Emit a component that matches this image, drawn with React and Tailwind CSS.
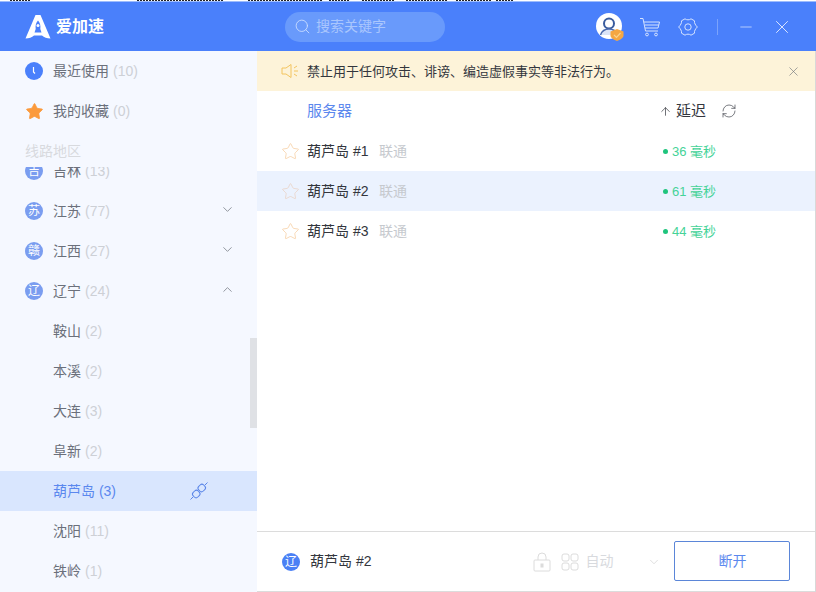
import React from "react";
import { ChevronDown, ChevronUp, Search, Minus, X, RefreshCw, Star, ArrowUp } from "lucide-react";

const font = { fontFamily: '"Liberation Sans", "Noto Sans CJK SC", sans-serif' };

// leftover pixels from the window behind, along the very top edge
const topDashes = [
  [10, 20], [137, 86], [248, 74], [329, 21], [362, 33], [406, 42], [456, 36], [496, 18],
];

function Badge({ text, dark }) {
  return (
    <span className={`flex h-[18px] w-[18px] shrink-0 items-center justify-center rounded-full text-[12px] leading-none text-white ${dark ? "bg-[#4a80f5]" : "bg-[#7a9df0]"}`}>
      {text}
    </span>
  );
}

function Province({ badge, name, count, open }) {
  return (
    <div className="flex h-10 items-center pl-[25px] pr-[22px]">
      <Badge text={badge} />
      <span className="ml-[10px] text-[14px] text-[#6b707b]">{name}</span>
      <span className="ml-1 text-[14px] text-[#cdd0d6]">({count})</span>
      {open !== undefined && (
        <span className="ml-auto -mt-[3px] text-[#70757f]">
          {open ? <ChevronUp size={15} strokeWidth={1.2} /> : <ChevronDown size={15} strokeWidth={1.2} />}
        </span>
      )}
    </div>
  );
}

function City({ name, count }) {
  return (
    <div className="flex h-10 items-center pl-[53px]">
      <span className="text-[14px] text-[#6b707b]">{name}</span>
      <span className="ml-1 text-[14px] text-[#cdd0d6]">({count})</span>
    </div>
  );
}

function ServerRow({ num, ms, active }) {
  return (
    <div className={`flex h-10 items-center pl-[24px] pt-px ${active ? "bg-[#ebf2fe]" : ""}`}>
      <Star size={19} strokeWidth={0.9} className={active ? "text-[#e8cfc0]" : "text-[#f5c99a]"} />
      <span className="ml-[7px] w-[72px] text-[14px] text-[#33363d]">葫芦岛 #{num}</span>
      <span className="text-[14px] text-[#c6c9ce]">联通</span>
      <span className="ml-[256px] h-[5px] w-[5px] rounded-full bg-[#1fc47d]" />
      <span className="ml-[4px] text-[13px] text-[#45d398]">{ms} 毫秒</span>
    </div>
  );
}

export default function App() {
  return (
    <div className="relative flex h-[592px] w-[816px] flex-col overflow-hidden bg-white" style={font}>
      <div className="h-[1px] shrink-0 bg-white">
        {topDashes.map(([x, w], i) => (
          <span key={i} className="absolute top-0 h-px bg-[repeating-linear-gradient(90deg,#222_0,#222_2px,transparent_2px,transparent_3px)]" style={{ left: x, width: w }} />
        ))}
      </div>

      {/* top bar */}
      <div className="flex h-[50px] shrink-0 items-center border-t border-[#9dbcfd] bg-[#4a80fb]">
        <div className="ml-[25px] flex w-[260px] items-center">
          <svg width="26" height="26" viewBox="0 0 26 26">
            <path d="M10.5 1 H15.5 L25.5 24.5 C22 24.5 19 23.5 17 21.5 H9 C7 23.5 4 24.5 0.5 24.5 Z" fill="#fff" />
            <path d="M13 6.5 C15 8.5 15.8 11.5 15.3 15 L16.5 18.5 H9.5 L10.7 15 C10.2 11.5 11 8.5 13 6.5 Z" fill="#4a80fb" />
            <circle cx="13" cy="11.5" r="1.5" fill="#fff" />
          </svg>
          <span className="ml-[5px] text-[16px] font-bold text-white">爱加速</span>
        </div>
        <div className="flex h-[30px] w-[160px] items-center rounded-full bg-[#699afb] pl-[9px]">
          <Search size={17} strokeWidth={1.2} className="text-[#cfe0ff]" />
          <span className="ml-[5px] text-[14px] text-[#a9c6fd]">搜索关键字</span>
        </div>
        <svg width="28" height="28" viewBox="0 0 28 28" className="ml-[151px]">
          <circle cx="13" cy="13" r="13" fill="#fff" />
          <circle cx="13" cy="10.5" r="5" fill="#fff" stroke="#3a5c9e" strokeWidth="2" />
          <path d="M4.5 22 C6 17.5 9 16 13 16 C17 16 20 17.5 21.5 22" fill="#dbe4f7" stroke="#4a6aae" strokeWidth="1.4" />
          <path d="M21 16 L27.5 18.5 V22.5 C27.5 25 24 27 21 28 C18 27 14.5 25 14.5 22.5 V18.5 Z" fill="#f5a742" />
          <path d="M18 22 L20.5 24.5 L24.5 20" fill="none" stroke="#fbd38d" strokeWidth="1.2" />
        </svg>
        <svg width="22" height="20" viewBox="0 0 22 20" fill="none" stroke="#d5e3ff" strokeWidth="1" className="ml-[15px]">
          <path d="M1 1.5 H4 L6.5 14 H19" />
          <path d="M4.8 5 H20.5 L19 11 H6" />
          <path d="M6 8 H19.8" />
          <circle cx="8" cy="17.5" r="1.4" />
          <circle cx="17" cy="17.5" r="1.4" />
        </svg>
        <svg width="20" height="20" viewBox="0 0 20 20" fill="none" stroke="#d5e3ff" strokeWidth="1" strokeLinejoin="round" className="ml-[17px]">
          <path d="M7 1.8 C8.5 3.2 11.5 3.2 13 1.8 L16.5 3.8 C16 5.8 17.5 8.3 19.4 10 C17.5 11.7 16 14.2 16.5 16.2 L13 18.2 C11.5 16.8 8.5 16.8 7 18.2 L3.5 16.2 C4 14.2 2.5 11.7 0.6 10 C2.5 8.3 4 5.8 3.5 3.8 Z" />
          <circle cx="10" cy="10" r="3.2" />
        </svg>
        <span className="ml-[19px] h-[16px] w-px bg-[#7ba3fc]" />
        <Minus size={18} strokeWidth={1} className="ml-[19px] text-[#d5e3ff]" />
        <X size={22} strokeWidth={1} className="ml-[16px] text-[#e6eeff]" />
      </div>

      <div className="flex min-h-0 flex-1">
        {/* sidebar */}
        <div className="relative w-[257px] shrink-0 bg-[#f5f8ff]">
          <div className="flex h-10 items-center pl-[25px]">
            <svg width="18" height="18" viewBox="0 0 18 18">
              <circle cx="9" cy="9" r="9" fill="#4a80fb" />
              <path d="M8.5 5 V10 L10 11.5" fill="none" stroke="#fff" strokeWidth="1.2" />
            </svg>
            <span className="ml-[10px] text-[14px] text-[#6b707b]">最近使用</span>
            <span className="ml-1 text-[14px] text-[#cdd0d6]">(10)</span>
          </div>
          <div className="flex h-10 items-center pl-[25px]">
            <Star size={19} fill="#fb9a3c" strokeWidth={1} className="text-[#fb9a3c]" />
            <span className="ml-[9px] text-[14px] text-[#6b707b]">我的收藏</span>
            <span className="ml-1 text-[14px] text-[#cdd0d6]">(0)</span>
          </div>
          <div className="flex h-[36px] items-center pl-[25px] pt-[4px] text-[14px] text-[#d8dade]">线路地区</div>
          {/* half scrolled row */}
          <div className="flex h-[24px] items-end overflow-hidden">
            <div className="w-full shrink-0">
              <Province badge="吉" name="吉林" count="13" />
            </div>
          </div>
          <Province badge="苏" name="江苏" count="77" open={false} />
          <Province badge="赣" name="江西" count="27" open={false} />
          <Province badge="辽" name="辽宁" count="24" open />
          <City name="鞍山" count="2" />
          <City name="本溪" count="2" />
          <City name="大连" count="3" />
          <City name="阜新" count="2" />
          <div className="flex h-10 items-center bg-[#d9e6fe] pl-[53px]">
            <span className="text-[14px] text-[#5b88ee]">葫芦岛 (3)</span>
            <svg width="18" height="18" viewBox="0 0 18 18" fill="none" stroke="#5b86e8" strokeWidth="1" className="ml-[74px]">
              <path d="M0.5 17.5 L3 15 M15 3 L17.5 0.5" />
              <rect x="3" y="8.5" width="6.5" height="7" rx="2.5" transform="rotate(45 6.25 12)" />
              <rect x="8.5" y="2.5" width="6.5" height="7" rx="2.5" transform="rotate(45 11.75 6)" />
            </svg>
          </div>
          <City name="沈阳" count="11" />
          <City name="铁岭" count="1" />
          <div className="absolute right-0 top-[287px] h-[90px] w-[7px] bg-[#dfe1e5]" />
        </div>

        {/* main */}
        <div className="flex min-w-0 flex-1 flex-col border-r border-[#d8d8d8]">
          <div className="flex h-10 shrink-0 items-center bg-[#fdf3d9] pl-[24px]">
            <svg width="18" height="16" viewBox="0 0 18 16" fill="none" stroke="#f3c45e" strokeWidth="1">
              <path d="M1 5 H5 L10 1.5 V14.5 L5 11 H1 Z" />
              <path d="M13 5 L16 3 M13 8 H17 M13 11 L16 13" />
            </svg>
            <span className="ml-[8px] pt-px text-[13px] text-[#33363d]">禁止用于任何攻击、诽谤、编造虚假事实等非法行为。</span>
            <X size={15} strokeWidth={1} className="ml-auto mr-[14px] text-[#6c7078]" />
          </div>
          <div className="flex h-10 shrink-0 items-center pl-[50px]">
            <span className="text-[15px] text-[#5b88ee]">服务器</span>
            <ArrowUp size={13} strokeWidth={1.3} className="ml-[307px] text-[#33363d]" />
            <span className="ml-[4px] text-[15px] text-[#33363d]">延迟</span>
            <RefreshCw size={16} strokeWidth={1.1} className="ml-[15px] text-[#4a4d55]" />
          </div>
          <ServerRow num="1" ms="36" />
          <ServerRow num="2" ms="61" active />
          <ServerRow num="3" ms="44" />

          {/* bottom bar */}
          <div className="mt-auto flex h-[61px] shrink-0 items-center border-t border-b border-[#dcdcdc] pl-[25px]">
            <Badge text="辽" dark />
            <span className="ml-[10px] text-[14px] text-[#33363d]">葫芦岛 #2</span>
            <svg width="18" height="20" viewBox="0 0 18 20" fill="none" stroke="#dcdcdc" strokeWidth="1" className="ml-[162px]">
              <rect x="1" y="8" width="16" height="11" rx="1" />
              <path d="M5 8 V5 a4 4 0 0 1 8 0 V8" />
              <rect x="8" y="12" width="2" height="3" fill="#dcdcdc" />
            </svg>
            <svg width="18" height="18" viewBox="0 0 18 18" fill="none" stroke="#dcdcdc" strokeWidth="1" className="ml-[10px]">
              <rect x="1" y="1" width="7" height="7" rx="2" />
              <rect x="10" y="1" width="7" height="7" rx="2" />
              <rect x="1" y="10" width="7" height="7" rx="2" />
              <rect x="10" y="10" width="7" height="7" rx="2" />
            </svg>
            <span className="ml-[6px] text-[14px] text-[#d8dade]">自动</span>
            <ChevronDown size={14} strokeWidth={1} className="ml-[34px] text-[#c8c8c8]" />
            <div className="mb-px ml-[13px] flex h-10 w-[116px] items-center justify-center rounded-[2px] border border-[#5b86d8] text-[14px] text-[#5b88ee]">
              断开
            </div>
          </div>
        </div>
      </div>
    </div>
  );
}
